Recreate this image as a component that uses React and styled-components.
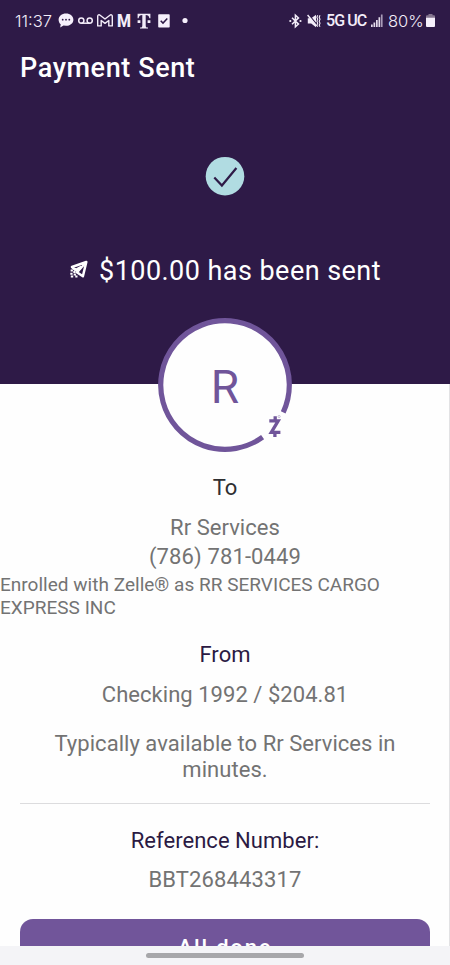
import React from 'react'
import styled, { createGlobalStyle } from 'styled-components'

const GlobalStyle = createGlobalStyle`
  * {
    box-sizing: border-box;
  }

  body {
    margin: 0;
    background-color: #fefefe;
    font-family: Roboto, 'Liberation Sans', sans-serif;
  }
`

const Screen = styled.div`
  display: flex;
  flex-direction: column;
  width: 450px;
  height: 965px;
  overflow: hidden;
  background-color: #fefefe;
`

const Header = styled.header`
  display: flex;
  flex-direction: column;
  flex: none;
  height: 384px;
  background-color: #2e1a47;
  color: #ffffff;
`

const StatusBar = styled.div`
  display: flex;
  align-items: center;
  justify-content: space-between;
  height: 41px;
  padding: 0 15px 0 15px;
  color: #f3edf9;
`

const StatusGroup = styled.div`
  display: flex;
  align-items: center;
`

const StatusText = styled.span`
  width: ${props => props.width};
  margin-left: ${props => props.offset || '0'};
  font-family: ${props => props.font || 'Inter'}, sans-serif;
  font-size: ${props => props.size};
  font-weight: ${props => props.weight};
  letter-spacing: ${props => props.spacing || 'normal'};
  line-height: 20px;
  white-space: nowrap;
`

const MailLetter = styled(StatusText)`
  transform: scaleX(0.84);
  transform-origin: left center;
`

const StatusIcon = styled.svg`
  display: block;
  flex: none;
  margin-left: ${props => props.$offset};
  overflow: visible;
`

const Title = styled.h1`
  margin: 10px 0 0 20px;
  font-size: 27px;
  font-weight: 500;
  letter-spacing: 0.6px;
  line-height: 34px;
`

const CheckBadge = styled.svg`
  display: block;
  margin: 71px auto 0;
`

const SentMessage = styled.div`
  display: flex;
  align-items: center;
  justify-content: center;
  gap: 11px;
  margin-top: 58px;
  padding-left: 1px;
  font-size: 27px;
  letter-spacing: 0.45px;
  line-height: 34px;
`

const Details = styled.main`
  display: flex;
  flex-direction: column;
  flex: none;
  height: 562px;
  overflow: visible;
  border-right: 1px solid #e2e2e4;
`

const Avatar = styled.div`
  position: relative;
  flex: none;
  width: 134px;
  height: 134px;
  margin: -66px 0 0 158px;
`

const Ring = styled.svg`
  position: absolute;
  inset: 0;
`

const Initial = styled.div`
  position: relative;
  color: #70559a;
  font-size: 46px;
  line-height: 139px;
  text-align: center;
`

const Label = styled.div`
  margin-top: ${props => props.top};
  padding-left: 1px;
  color: ${props => props.color || '#2b1a43'};
  font-size: 22px;
  letter-spacing: 0.04px;
  line-height: 26px;
  text-align: center;
`

const Value = styled.div`
  margin-top: ${props => props.top};
  padding-left: 1px;
  color: #737373;
  font-size: 22px;
  letter-spacing: ${props => props.spacing || '0.04px'};
  line-height: 26px;
  text-align: center;
`

const Enrollment = styled.div`
  margin-top: 4px;
  color: #737373;
  font-size: 19px;
  letter-spacing: 0.02px;
  line-height: 22.5px;
`

const Divider = styled.hr`
  width: 410px;
  height: 1px;
  margin: 20px 0 0 20px;
  border: 0;
  background-color: #dcdcde;
`

const ButtonArea = styled.div`
  height: 27px;
  margin: 26px 19px 0 20px;
  overflow: hidden;
`

const DoneButton = styled.button`
  display: block;
  width: 410px;
  height: 62px;
  padding: 0 0 4px;
  border: 0;
  border-radius: 13px;
  background-color: #71559a;
  color: #ffffff;
  font-family: inherit;
  font-size: 22px;
  font-weight: 500;
  letter-spacing: 1.8px;
  line-height: 58px;
`

const NavigationBar = styled.footer`
  display: flex;
  justify-content: center;
  flex: none;
  height: 19px;
  padding-top: 7px;
  background-color: #f4f4f7;
`

const HomeHandle = styled.div`
  width: 158px;
  height: 5px;
  border-radius: 3px;
  background-color: #a7a7aa;
`

const Notifications = () => (
  <StatusGroup>
    <StatusText size='16.5px' weight={300} width='37px' spacing='0'>
      11:37
    </StatusText>
    <StatusIcon $offset='6px' width='16' height='15' viewBox='0 0 16 15'>
      <path
        d='M8 .5c4.2 0 7.4 2.7 7.4 6.2S12.200 12.800 8 12.800L5.500 12.500 2.200 14.500 2.700 11.300C1.300 10.200.6 8.600.6 6.700.6 3.200 3.800.5 8 .5Z'
        fill='#f6f0fc'
      />
      <g fill='#2e1a47'>
        <circle cx='4.700' cy='6.700' r='.9' />
        <circle cx='8' cy='6.700' r='.9' />
        <circle cx='11.300' cy='6.700' r='.9' />
      </g>
    </StatusIcon>
    <StatusIcon $offset='4px' width='15' height='8' viewBox='0 0 15 8'>
      <g fill='none' stroke='#f3edf9' strokeWidth='1.500'>
        <circle cx='3.300' cy='3.600' r='2.600' />
        <circle cx='11.700' cy='3.600' r='2.600' />
        <path d='M3.300 6.200h8.400' />
      </g>
    </StatusIcon>
    <StatusIcon $offset='4px' width='16' height='13' viewBox='0 0 16 13'>
      <path
        d='M.7 11.900V2.200C.7.8 2.100.4 3.100 1.200L8 5 12.900 1.200c1-.8 2.400-.4 2.400 1v9.700h-3.500V6.500L8 9.400 4.200 6.500v5.400Z'
        fill='none'
        stroke='#f3edf9'
        strokeWidth='1.400'
        strokeLinejoin='round'
      />
    </StatusIcon>
    <MailLetter
      size='19px'
      weight={800}
      font='Roboto'
      width='16px'
      offset='4px'
    >
      M
    </MailLetter>
    <StatusIcon $offset='4px' width='14' height='16' viewBox='0 0 14 16'>
      <g fill='#f3edf9'>
        <path d='M.6.700h12.800v4.600h-1C12 2.900 11 1.900 8.700 1.900v10.500c0 1.800.6 2.200 2.300 2.200v.9H3v-.9c1.700 0 2.300-.4 2.300-2.200V1.900C3 1.900 2 2.900 1.600 5.300h-1Z' />
        <path d='M.6 7.300h2.800V10H.6ZM10.600 7.300h2.800V10h-2.800Z' />
      </g>
    </StatusIcon>
    <StatusIcon $offset='7px' width='12' height='14' viewBox='0 0 12 14'>
      <rect x='.2' y='.3' width='11.500' height='13.300' rx='.8' fill='#f6f0fc' />
      <path
        d='m2.700 6.700 2.300 2.400 4.300-4.500'
        fill='none'
        stroke='#2e1a47'
        strokeWidth='1.500'
      />
    </StatusIcon>
    <StatusIcon $offset='12px' width='6' height='6' viewBox='0 0 6 6'>
      <circle cx='3' cy='2.500' r='2.600' fill='#f6f0fc' />
    </StatusIcon>
  </StatusGroup>
)

const SystemStatus = () => (
  <StatusGroup>
    <StatusIcon $offset='0' width='13' height='14' viewBox='0 0 13 14'>
      <path
        d='m3 3.800 6.500 6.300-3.100 2.800V1.100l3.100 2.800L3 10.200'
        fill='none'
        stroke='#f3edf9'
        strokeWidth='1.500'
      />
      <circle cx='1.300' cy='7' r='1.100' fill='#f3edf9' />
      <circle cx='11.500' cy='7' r='1.100' fill='#f3edf9' />
    </StatusIcon>
    <StatusIcon $offset='5px' width='14' height='14' viewBox='0 0 14 14'>
      <path d='M.8 4.300h3.400L9 .8v12.400L4.200 9.600H.8Z' fill='#f3edf9' />
      <path d='m1.600.4 8.500 10.400' stroke='#2e1a47' strokeWidth='1.200' />
      <path d='m.6 1 8.900 11' stroke='#f3edf9' strokeWidth='1.400' />
      <path
        d='m10.700 1.200-.8 2 .8 2-.8 2 .8 2-.8 2 .8 1.500M13 1.200l-.8 2 .8 2-.8 2 .8 2-.8 2 .8 1.500'
        fill='none'
        stroke='#f3edf9'
        strokeWidth='1.100'
      />
    </StatusIcon>
    <StatusText
      size='16px'
      weight={500}
      font='Roboto'
      width='40px'
      offset='5px'
      spacing='-0.9px'
    >
      5G UC
    </StatusText>
    <StatusIcon $offset='5px' width='12' height='13' viewBox='0 0 12 13'>
      <path
        d='M0 10.500h1.700V13H0ZM2.500 8.500h1.700V13H2.500ZM5 6h1.700v7H5ZM7.500 3.300h1.700V13H7.500Z'
        fill='#e4dceb'
      />
      <path d='M9.900.5h1.700V13H9.900Z' fill='#a99cb8' />
    </StatusIcon>
    <StatusText
      size='16.500px'
      weight={300}
      width='36px'
      offset='5px'
      spacing='0'
    >
      80%
    </StatusText>
    <StatusIcon $offset='2px' width='9' height='13' viewBox='0 0 9 13'>
      <path d='M2.500 0h4v1.200h1.500q1 0 1 1V4H0V2.200q0-1 1-1h1.500Z' fill='#84758f' />
      <path d='M0 3.700h9V12q0 1-1 1H1q-1 0-1-1Z' fill='#f6f0fc' />
    </StatusIcon>
  </StatusGroup>
)

const PaperPlane = () => (
  <svg width='18' height='22' viewBox='0 0 18 22'>
    <path
      d='M16.300 2 2 7l3.400 3 5.400-2.900-4 5.100 6.100 4Z'
      fill='none'
      stroke='#ffffff'
      strokeWidth='2.500'
      strokeLinejoin='round'
    />
    <path d='m16.200 2.200-8.400 9.200' stroke='#ffffff' strokeWidth='2.200' />
    <path
      d='M.6 10.400h2.300M.3 13.700h2.300M3.300 12h2.200M.8 16.600h2.400M3.700 14.600h2.200M5.300 16.600h2.200'
      stroke='#ffffff'
      strokeWidth='2'
    />
  </svg>
)

const RecipientAvatar = () => (
  <Avatar>
    <Ring width='134' height='134' viewBox='0 0 134 134'>
      <circle cx='67' cy='67' r='64' fill='#fefefe' />
      <path
        d='M104.600 119.200A64.300 64.300 0 1 1 125.200 94.400'
        fill='none'
        stroke='#70559a'
        strokeWidth='5.200'
      />
      <path
        d='M111.300 102.800h8.900L113.300 114.400h9.100M117.200 98.200v5M116.900 114.400v4.700'
        fill='none'
        stroke='#70559a'
        strokeWidth='3.300'
      />
      <circle
        cx='121.100'
        cy='98.500'
        r='1.100'
        fill='none'
        stroke='#aa9bc2'
        strokeWidth='.6'
      />
    </Ring>
    <Initial>R</Initial>
  </Avatar>
)

const App = () => (
  <>
    <GlobalStyle />
    <Screen>
      <Header>
        <StatusBar>
          <Notifications />
          <SystemStatus />
        </StatusBar>
        <Title>Payment Sent</Title>
        <CheckBadge width='40' height='40' viewBox='0 0 40 40'>
          <circle cx='20' cy='20.200' r='19.300' fill='#b1dce2' />
          <path
            d='m9.300 21.500 7.600 8L31.400 12'
            fill='none'
            stroke='#2e1a47'
            strokeWidth='2.200'
          />
        </CheckBadge>
        <SentMessage>
          <PaperPlane />
          <span>$100.00 has been sent</span>
        </SentMessage>
      </Header>
      <Details>
        <RecipientAvatar />
        <Label top='23px' color='#2f2f31'>
          To
        </Label>
        <Value top='14px'>Rr Services</Value>
        <Value top='3px' spacing='0.12px'>
          (786) 781-0449
        </Value>
        <Enrollment>
          Enrolled with Zelle® as RR SERVICES CARGO
          <br />
          EXPRESS INC
        </Enrollment>
        <Label top='23px'>From</Label>
        <Value top='14px'>Checking 1992 / $204.81</Value>
        <Value top='23px'>
          Typically available to Rr Services in
          <br />
          minutes.
        </Value>
        <Divider />
        <Label top='24px'>Reference Number:</Label>
        <Value top='13px' spacing='0.12px'>
          BBT268443317
        </Value>
        <ButtonArea>
          <DoneButton>All done</DoneButton>
        </ButtonArea>
      </Details>
      <NavigationBar>
        <HomeHandle />
      </NavigationBar>
    </Screen>
  </>
)

export default App
